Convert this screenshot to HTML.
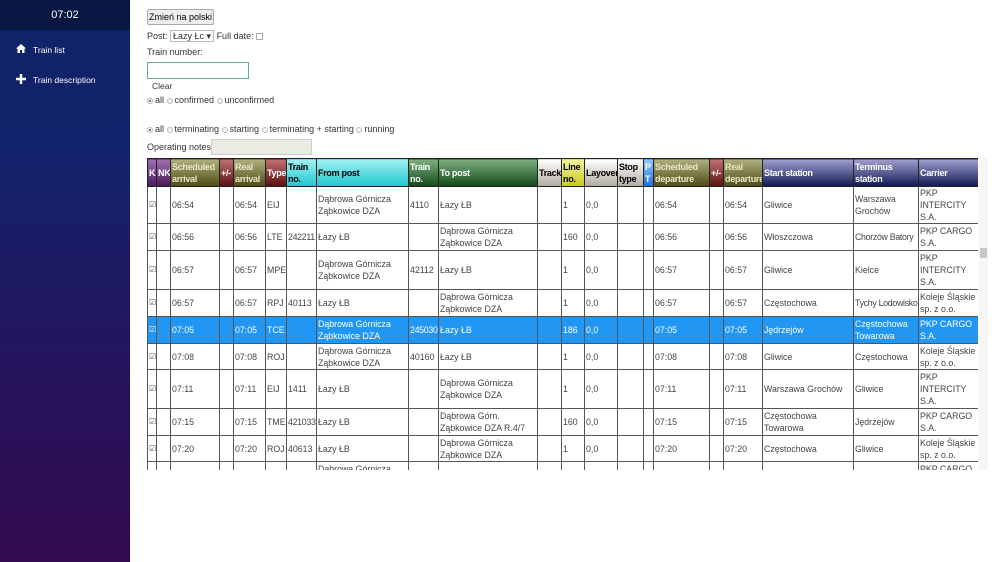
<!DOCTYPE html>
<html><head><meta charset="utf-8"><style>
*{box-sizing:border-box}
body{margin:0;width:1000px;height:562px;overflow:hidden;background:#fff;font-family:"Liberation Sans",sans-serif;font-size:9px;color:#333;position:relative}
#sb{position:absolute;left:0;top:0;width:130px;height:562px;background:linear-gradient(#0e2468 0%,#13226a 30%,#231660 60%,#320a4e 100%)}
#sb .top{height:30px;background:#081743;color:#fff;text-align:center;font-size:11px;line-height:30px}
#sb .it{position:absolute;left:33px;color:#fff;font-size:8.5px}
.ic{position:absolute;left:16px}
.main{position:absolute;left:147px}
button{position:absolute;left:147px;top:9px;width:67px;height:16px;font:9px "Liberation Sans",sans-serif;background:#eee;border:1px solid #aaa;border-radius:2px;padding:0}
.rad{display:inline-block;width:6px;height:6px;border-radius:50%;border:1px solid #bbb;vertical-align:middle;margin-right:2px;background:#f5f5f5}
.rad.on{background:radial-gradient(#777 35%,#f5f5f5 45%)}
table{position:absolute;left:147px;top:158px;border-collapse:collapse;table-layout:fixed;width:831px}
td,th{border:1px solid #555;padding:0 1px;font-size:8.8px;line-height:12px;overflow:hidden;vertical-align:middle;text-align:left;font-weight:normal;white-space:normal;color:#444}
th{height:28px;font-weight:bold;color:#fff;letter-spacing:-0.3px;border-color:#222;font-size:9px}
.pu{background:linear-gradient(#a070b0,#4a1858)}
.ol{background:linear-gradient(#b0b080,#4d4a15);color:#e8e8c8}
.rd{background:linear-gradient(#c07070,#5a1010)}
.cy{background:linear-gradient(#a0f0f4,#20c8d0);color:#000}
.gr{background:linear-gradient(#80b080,#104818)}
.lg{background:linear-gradient(#fff,#b0aaa0);color:#000}
.ye{background:linear-gradient(#f4f4a0,#c8c820);color:#000}
.bl{background:linear-gradient(#90c8ff,#2070e0)}
.nv{background:linear-gradient(#a0a0d0,#101850)}
tr.sel td{background:#2196f3;color:#fff}
.cb{font-size:8px;color:#555}
tr.sel .cb{color:#fff}
.nw{white-space:nowrap;letter-spacing:-0.3px}
#clip{position:absolute;left:147px;top:158px;width:831px;height:312px;overflow:hidden}
#clip table{left:0;top:0}
#sc{position:absolute;left:979px;top:158px;width:9px;height:312px;background:#f6f6f6}
</style></head><body>
<div id="sb"><div class="top">07:02</div>
<svg class="ic" style="top:44px" width="10" height="9" viewBox="0 0 10 9"><path d="M5 0L0 4.5h1.5V9h2.5V6h2v3h2.5V4.5H10z" fill="#fff"/></svg>
<div class="it" style="top:45px">Train list</div>
<svg class="ic" style="top:74px" width="10" height="10" viewBox="0 0 10 10"><path d="M3.8 0h2.4v3.8H10v2.4H6.2V10H3.8V6.2H0V3.8h3.8z" fill="#fff"/></svg>
<div class="it" style="top:75px">Train description</div>
</div>
<button>Zmień na polski</button>
<div class="main" style="top:30px">Post: <span style="display:inline-block;border:1px solid #bbb;padding:0 2px;height:12px;line-height:11px">Łazy Łc ▾</span> Full date: <span style="display:inline-block;width:7px;height:7px;border:1px solid #aaa;vertical-align:middle"></span></div>
<div class="main" style="top:47px">Train number:</div>
<div class="main" style="top:62px;width:102px;height:17px;border:1px solid #6a9;"></div>
<div class="main" style="top:81px;left:152px;font-size:8.5px">Clear</div>
<div class="main" style="top:95px"><span class="rad on"></span>all <span class="rad"></span>confirmed <span class="rad"></span>unconfirmed</div>
<div class="main" style="top:124px"><span class="rad on"></span>all <span class="rad"></span>terminating <span class="rad"></span>starting <span class="rad"></span>terminating + starting <span class="rad"></span>running</div>
<div class="main" style="top:142px">Operating notes:</div>
<div style="position:absolute;left:211px;top:139px;width:101px;height:16px;background:#ebebe4;border:1px solid #ccc"></div>
<div id="clip"><table>
<colgroup><col style="width:9px"><col style="width:14px"><col style="width:49px"><col style="width:14px"><col style="width:32px"><col style="width:21px"><col style="width:30px"><col style="width:92px"><col style="width:30px"><col style="width:99px"><col style="width:24px"><col style="width:23px"><col style="width:33px"><col style="width:26px"><col style="width:10px"><col style="width:56px"><col style="width:14px"><col style="width:39px"><col style="width:91px"><col style="width:65px"><col style="width:60px"></colgroup>
<tr><th class="pu">K</th><th class="pu">NK</th><th class="ol">Scheduled arrival</th><th class="rd">+/-</th><th class="ol">Real arrival</th><th class="rd">Type</th><th class="cy">Train no.</th><th class="cy">From post</th><th class="gr">Train no.</th><th class="gr">To post</th><th class="lg">Track</th><th class="ye">Line no.</th><th class="lg">Layover</th><th class="lg">Stop type</th><th class="bl">P T</th><th class="ol">Scheduled departure</th><th class="rd">+/-</th><th class="ol">Real departure</th><th class="nv">Start station</th><th class="nv">Terminus station</th><th class="nv">Carrier</th></tr>
<tr style="height:36px"><td class="cb">☑</td><td></td><td>06:54</td><td></td><td>06:54</td><td>EIJ</td><td></td><td>Dąbrowa Górnicza Ząbkowice DZA</td><td>4110</td><td>Łazy ŁB</td><td></td><td>1</td><td>0,0</td><td></td><td></td><td>06:54</td><td></td><td>06:54</td><td>Gliwice</td><td>Warszawa Grochów</td><td>PKP INTERCITY S.A.</td></tr>
<tr style="height:27px"><td class="cb">☑</td><td></td><td>06:56</td><td></td><td>06:56</td><td>LTE</td><td class="nw">242211</td><td>Łazy ŁB</td><td></td><td>Dąbrowa Górnicza Ząbkowice DZA</td><td></td><td>160</td><td>0,0</td><td></td><td></td><td>06:56</td><td></td><td>06:56</td><td>Włoszczowa</td><td class="nw">Chorzów Batory</td><td>PKP CARGO S.A.</td></tr>
<tr style="height:39px"><td class="cb">☑</td><td></td><td>06:57</td><td></td><td>06:57</td><td>MPE</td><td></td><td>Dąbrowa Górnicza Ząbkowice DZA</td><td>42112</td><td>Łazy ŁB</td><td></td><td>1</td><td>0,0</td><td></td><td></td><td>06:57</td><td></td><td>06:57</td><td>Gliwice</td><td>Kielce</td><td>PKP INTERCITY S.A.</td></tr>
<tr style="height:27px"><td class="cb">☑</td><td></td><td>06:57</td><td></td><td>06:57</td><td>RPJ</td><td>40113</td><td>Łazy ŁB</td><td></td><td>Dąbrowa Górnicza Ząbkowice DZA</td><td></td><td>1</td><td>0,0</td><td></td><td></td><td>06:57</td><td></td><td>06:57</td><td>Częstochowa</td><td class="nw">Tychy Lodowisko</td><td>Koleje Śląskie sp. z o.o.</td></tr>
<tr class="sel" style="height:27px"><td class="cb">☑</td><td></td><td>07:05</td><td></td><td>07:05</td><td>TCE</td><td></td><td>Dąbrowa Górnicza Ząbkowice DZA</td><td class="nw">245030</td><td>Łazy ŁB</td><td></td><td>186</td><td>0,0</td><td></td><td></td><td>07:05</td><td></td><td>07:05</td><td>Jędrzejów</td><td>Częstochowa Towarowa</td><td>PKP CARGO S.A.</td></tr>
<tr style="height:26px"><td class="cb">☑</td><td></td><td>07:08</td><td></td><td>07:08</td><td>ROJ</td><td></td><td>Dąbrowa Górnicza Ząbkowice DZA</td><td>40160</td><td>Łazy ŁB</td><td></td><td>1</td><td>0,0</td><td></td><td></td><td>07:08</td><td></td><td>07:08</td><td>Gliwice</td><td>Częstochowa</td><td>Koleje Śląskie sp. z o.o.</td></tr>
<tr style="height:39px"><td class="cb">☑</td><td></td><td>07:11</td><td></td><td>07:11</td><td>EIJ</td><td>1411</td><td>Łazy ŁB</td><td></td><td>Dąbrowa Górnicza Ząbkowice DZA</td><td></td><td>1</td><td>0,0</td><td></td><td></td><td>07:11</td><td></td><td>07:11</td><td>Warszawa Grochów</td><td>Gliwice</td><td>PKP INTERCITY S.A.</td></tr>
<tr style="height:27px"><td class="cb">☑</td><td></td><td>07:15</td><td></td><td>07:15</td><td>TME</td><td class="nw">421033</td><td>Łazy ŁB</td><td></td><td>Dąbrowa Górn. Ząbkowice DZA R.4/7</td><td></td><td>160</td><td>0,0</td><td></td><td></td><td>07:15</td><td></td><td>07:15</td><td>Częstochowa Towarowa</td><td>Jędrzejów</td><td>PKP CARGO S.A.</td></tr>
<tr style="height:26px"><td class="cb">☑</td><td></td><td>07:20</td><td></td><td>07:20</td><td>ROJ</td><td>40613</td><td>Łazy ŁB</td><td></td><td>Dąbrowa Górnicza Ząbkowice DZA</td><td></td><td>1</td><td>0,0</td><td></td><td></td><td>07:20</td><td></td><td>07:20</td><td>Częstochowa</td><td>Gliwice</td><td>Koleje Śląskie sp. z o.o.</td></tr>
<tr style="height:27px"><td class="cb">☑</td><td></td><td>07:25</td><td></td><td>07:25</td><td>ROJ</td><td></td><td>Dąbrowa Górnicza Ząbkowice DZA</td><td></td><td>Łazy ŁB</td><td></td><td>1</td><td>0,0</td><td></td><td></td><td>07:25</td><td></td><td>07:25</td><td>KATOWICE</td><td></td><td>PKP CARGO S.A.</td></tr>
</table></div>
<div id="sc"><div style="position:absolute;top:90px;left:1px;width:7px;height:10px;background:#c8c8c8"></div></div>
</body></html>
